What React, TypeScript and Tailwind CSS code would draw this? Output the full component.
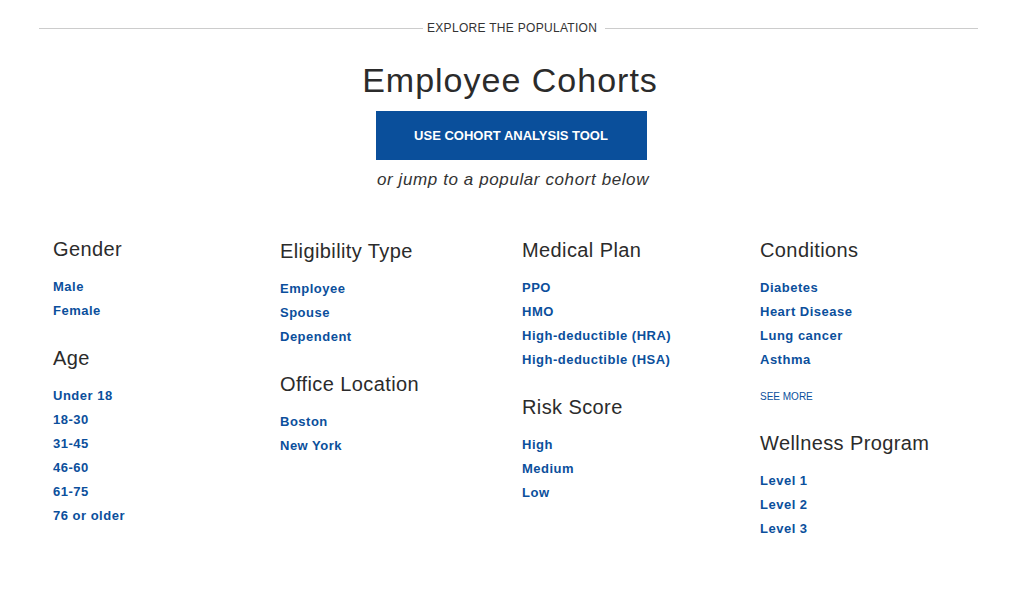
const columns = [
  {
    width: 'w-[227px]',
    pt: 'pt-0',
    sections: [
      { title: 'Gender', links: ['Male', 'Female'] },
      { title: 'Age', links: ['Under 18', '18-30', '31-45', '46-60', '61-75', '76 or older'] }
    ]
  },
  {
    width: 'w-[242px]',
    pt: 'pt-[2px]',
    sections: [
      { title: 'Eligibility Type', links: ['Employee', 'Spouse', 'Dependent'] },
      { title: 'Office Location', links: ['Boston', 'New York'] }
    ]
  },
  {
    width: 'w-[238px]',
    pt: 'pt-[1px]',
    sections: [
      { title: 'Medical Plan', links: ['PPO', 'HMO', 'High-deductible (HRA)', 'High-deductible (HSA)'] },
      { title: 'Risk Score', links: ['High', 'Medium', 'Low'] }
    ]
  }
]

function Section({ title, links }: { title: string; links: string[] }) {
  return (
    <div>
      <h3 className="text-[20px] leading-[24px] text-[#2b2b2b] font-normal tracking-[0.4px] mb-[14px]">{title}</h3>
      <ul>
        {links.map(l => (
          <li key={l} className="text-[13px] leading-[24px] font-bold text-[#0b4f9c] tracking-[0.5px]">
            <a href="#">{l}</a>
          </li>
        ))}
      </ul>
    </div>
  )
}

export default function App() {
  return (
    <div className="bg-white w-[1020px] h-[594px] overflow-hidden" style={{ fontFamily: '"Liberation Sans", Arial, sans-serif' }}>
      <div className="flex items-center pl-[39px] pr-[42px] pt-[20px]">
        <div className="w-[384px] h-px bg-[#cccccc]" />
        <span className="pl-[4px] pr-[8px] text-[12px] leading-[16px] text-[#333] tracking-[0.3px]">EXPLORE THE POPULATION</span>
        <div className="flex-1 h-px bg-[#cccccc]" />
      </div>

      <div className="flex flex-col items-center">
        <h1 className="mt-[25px] text-[34px] leading-[38px] text-[#2b2b2b] font-normal tracking-[1px]">Employee Cohorts</h1>
        <button className="mt-[12px] ml-[2px] w-[271px] h-[49px] bg-[#0a4f9b] text-white text-[13px] font-bold">
          USE COHORT ANALYSIS TOOL
        </button>
        <p className="mt-[9px] ml-[6px] text-[17px] leading-[22px] italic text-[#333] tracking-[0.6px]">or jump to a popular cohort below</p>
      </div>

      <div className="flex pl-[53px] mt-[46px]">
        {columns.map((c, i) => (
          <div key={i} className={`${c.width} ${c.pt} flex flex-col gap-[23px]`}>
            {c.sections.map(s => (
              <Section key={s.title} title={s.title} links={s.links} />
            ))}
          </div>
        ))}
        <div className="w-[230px] pt-[1px] flex flex-col">
          <Section title="Conditions" links={['Diabetes', 'Heart Disease', 'Lung cancer', 'Asthma']} />
          <a href="#" className="mt-[13px] text-[10px] leading-[24px] text-[#0b4f9c]">SEE MORE</a>
          <div className="mt-[22px]">
            <Section title="Wellness Program" links={['Level 1', 'Level 2', 'Level 3']} />
          </div>
        </div>
      </div>
    </div>
  )
}
